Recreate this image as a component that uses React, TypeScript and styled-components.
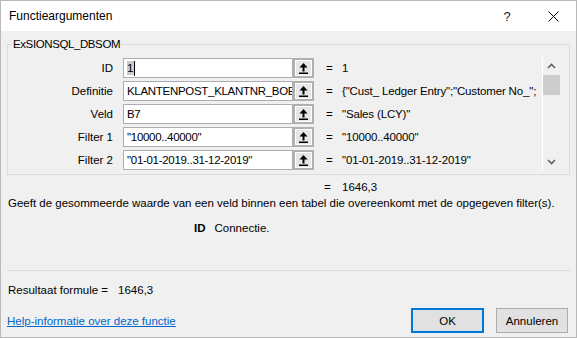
import React from "react";
import styled, { createGlobalStyle } from "styled-components";

const Global = createGlobalStyle`
  html, body { margin: 0; padding: 0; background: #f0f0f0; }
  body {
    font-family: "Liberation Sans", Arial, sans-serif;
    font-size: 11.5px;
    color: #000;
  }
  * { box-sizing: border-box; }
`;

const Window = styled.div`
  width: 577px;
  height: 338px;
  border: 1px solid #b9b9b9;
  background: #f0f0f0;
  display: flex;
  flex-direction: column;
  overflow: hidden;
`;

const TitleBar = styled.div`
  height: 30px;
  background: #ffffff;
  display: flex;
  align-items: center;
  padding-left: 8px;
  flex-shrink: 0;
`;

const Title = styled.div`
  flex: 1;
  font-size: 12px;
  line-height: 14px;
`;

const TitleButton = styled.div`
  width: 46px;
  height: 30px;
  display: flex;
  align-items: center;
  justify-content: center;
  font-size: 13px;
  color: #222;
`;

const Group = styled.fieldset`
  margin: 6px 6px 0 6px;
  padding: 7px 9px 4px 0;
  border: 1px solid #dcdcdc;
  min-width: 0;
  flex-shrink: 0;
`;

const Legend = styled.legend`
  margin-left: 4px;
  padding: 0 1px;
  line-height: 14px;
  letter-spacing: -0.4px;
`;

const GroupBody = styled.div`
  display: flex;
`;

const Rows = styled.div`
  flex: 1;
  min-width: 0;
  display: flex;
  flex-direction: column;
  gap: 3px;
`;

const Row = styled.div`
  display: flex;
  align-items: center;
  height: 20px;
`;

const Label = styled.div`
  width: 105px;
  margin-right: 10px;
  text-align: right;
  white-space: nowrap;
`;

const Field = styled.div`
  width: 170px;
  height: 20px;
  border: 1px solid #abadb3;
  background: #fff;
  padding: 0 3px;
  display: flex;
  align-items: center;
  white-space: nowrap;
  overflow: hidden;
  letter-spacing: -0.3px;
`;

const Selected = styled.span`
  background: #cccccc;
  padding: 0 1px 0 0;
  line-height: 14px;
`;

const Caret = styled.span`
  display: inline-block;
  width: 1px;
  height: 15px;
  background: #000;
`;

const CollapseButton = styled.div`
  width: 21px;
  height: 20px;
  border: 2px solid #b0b0b0;
  box-shadow: inset 0 0 0 1px #ffffff;
  background: #e6e6e6;
  display: flex;
  align-items: center;
  justify-content: center;
`;

const Eq = styled.div`
  margin-left: 12px;
  width: 16px;
`;

const Value = styled.div`
  flex: 1;
  min-width: 0;
  white-space: nowrap;
  overflow: hidden;
  letter-spacing: -0.15px;
`;

const ScrollBar = styled.div`
  width: 18px;
  margin-top: -1px;
  border-left: 1px solid #ffffff;
  display: flex;
  flex-direction: column;
`;

const ScrollArrow = styled.div`
  height: 17px;
  display: flex;
  align-items: center;
  justify-content: center;
`;

const Thumb = styled.div`
  height: 20px;
  margin-top: 1px;
  background: #cdcdcd;
`;

const ScrollTrack = styled.div`
  flex: 1;
`;

const ResultRow = styled.div`
  margin: 5px 0 0 323px;
  line-height: 14px;
  display: flex;
`;

const ResultEq = styled.span`
  width: 18px;
`;

const Description = styled.div`
  margin: 2px 0 0 7px;
  line-height: 14px;
  white-space: nowrap;
`;

const ArgHelp = styled.div`
  margin: 11px 0 0 193px;
  line-height: 14px;
  display: flex;
  gap: 9px;
`;

const ArgName = styled.span`
  font-weight: bold;
`;

const Separator = styled.div`
  margin: 35px 6px 0 6px;
  height: 1px;
  background: #dadada;
  flex-shrink: 0;
`;

const FormulaResult = styled.div`
  margin: 12px 0 0 7px;
  line-height: 14px;
  display: flex;
  gap: 10px;
`;

const Footer = styled.div`
  margin-top: 11px;
  height: 25px;
  padding: 0 8px 0 6px;
  display: flex;
  align-items: center;
  flex-shrink: 0;
`;

const HelpLink = styled.a`
  color: #0066cc;
  text-decoration: underline;
  flex: 1;
  line-height: 14px;
  cursor: pointer;
`;

const DialogButton = styled.button<{ $primary?: boolean; $w: number }>`
  width: ${(p) => p.$w}px;
  height: 25px;
  margin-left: ${(p) => (p.$primary ? 0 : 12)}px;
  border: ${(p) => (p.$primary ? "2px solid #0078d7" : "1px solid #adadad")};
  background: #e1e1e1;
  font-family: "Liberation Sans", Arial, sans-serif;
  font-size: 11.5px;
  color: #000;
  padding: 0;
`;

const RefIcon = () => (
  <svg width="9" height="11" viewBox="0 0 9 11">
    <polygon points="4.5,0 0.5,4.5 8.5,4.5" fill="#000" />
    <rect x="3.5" y="4" width="2" height="4.5" fill="#000" />
    <rect x="0" y="9.5" width="9" height="1.5" fill="#000" />
  </svg>
);

const Chevron = ({ up }: { up?: boolean }) => (
  <svg width="9" height="6" viewBox="0 0 9 6">
    <polyline
      points={up ? "1,5 4.5,1.5 8,5" : "1,1 4.5,4.5 8,1"}
      fill="none"
      stroke="#606060"
      strokeWidth="1.6"
    />
  </svg>
);

const CloseIcon = () => (
  <svg width="11" height="11" viewBox="0 0 11 11">
    <path d="M0.5 0.5 L10.5 10.5 M10.5 0.5 L0.5 10.5" stroke="#000" strokeWidth="1" />
  </svg>
);

const rows = [
  { label: "ID", field: null, value: "1" },
  { label: "Definitie", field: "KLANTENPOST_KLANTNR_BOEKINGSDATUM", value: '{"Cust_ Ledger Entry";"Customer No_";' },
  { label: "Veld", field: "B7", value: '"Sales (LCY)"' },
  { label: "Filter 1", field: '"10000..40000"', value: '"10000..40000"' },
  { label: "Filter 2", field: '"01-01-2019..31-12-2019"', value: '"01-01-2019..31-12-2019"' },
];

export default function App() {
  return (
    <>
      <Global />
      <Window>
        <TitleBar>
          <Title>Functieargumenten</Title>
          <TitleButton>?</TitleButton>
          <TitleButton>
            <CloseIcon />
          </TitleButton>
        </TitleBar>
        <Group>
          <Legend>ExSIONSQL_DBSOM</Legend>
          <GroupBody>
            <Rows>
              {rows.map((r) => (
                <Row key={r.label}>
                  <Label>{r.label}</Label>
                  <Field>
                    {r.field === null ? (
                      <>
                        <Selected>1</Selected>
                        <Caret />
                      </>
                    ) : (
                      r.field
                    )}
                  </Field>
                  <CollapseButton>
                    <RefIcon />
                  </CollapseButton>
                  <Eq>=</Eq>
                  <Value>{r.value}</Value>
                </Row>
              ))}
            </Rows>
            <ScrollBar>
              <ScrollArrow>
                <Chevron up />
              </ScrollArrow>
              <Thumb />
              <ScrollTrack />
              <ScrollArrow>
                <Chevron />
              </ScrollArrow>
            </ScrollBar>
          </GroupBody>
        </Group>
        <ResultRow>
          <ResultEq>=</ResultEq>
          <span>1646,3</span>
        </ResultRow>
        <Description>
          Geeft de gesommeerde waarde van een veld binnen een tabel die overeenkomt met de opgegeven filter(s).
        </Description>
        <ArgHelp>
          <ArgName>ID</ArgName>
          <span>Connectie.</span>
        </ArgHelp>
        <Separator />
        <FormulaResult>
          <span>Resultaat formule =</span>
          <span>1646,3</span>
        </FormulaResult>
        <Footer>
          <HelpLink>Help-informatie over deze functie</HelpLink>
          <DialogButton $primary $w={73}>OK</DialogButton>
          <DialogButton $w={72}>Annuleren</DialogButton>
        </Footer>
      </Window>
    </>
  );
}
